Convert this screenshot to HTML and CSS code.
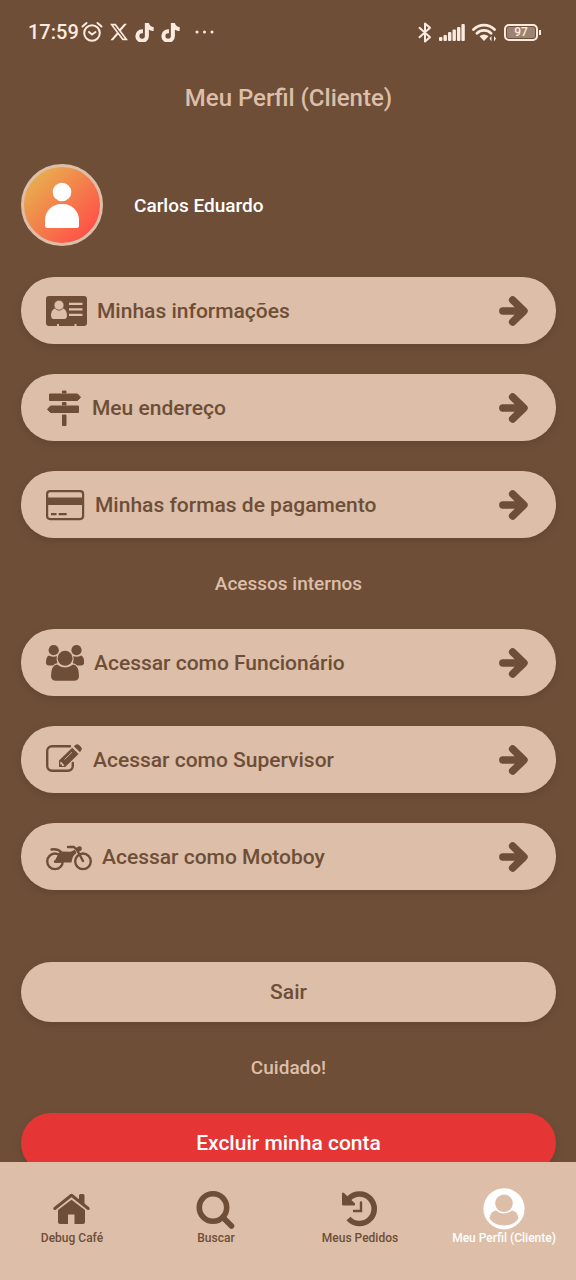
FILE: index.html
```
<!DOCTYPE html>
<html lang="pt-BR">
<head>
<meta charset="utf-8">
<meta name="viewport" content="width=device-width, initial-scale=1">
<title>Meu Perfil (Cliente)</title>
<link rel="stylesheet" href="styles.css">
</head>
<body>
<svg class="defs" aria-hidden="true">
  <symbol id="arrow" viewBox="0 0 30 30"><path d="M3.8 15H23M13.6 4 25 15 13.6 26" fill="none" stroke="currentColor" stroke-width="7.4" stroke-linecap="round" stroke-linejoin="round"/></symbol>
  <symbol id="tiktok" viewBox="0 0 16 16"><path d="M9 0h1.98c.144.715.54 1.617 1.235 2.512C12.895 3.389 13.797 4 15 4v2c-1.753 0-3.07-.814-4-1.829V11a5 5 0 1 1-5-5v2a3 3 0 1 0 3 3z" fill="currentColor" stroke="currentColor" stroke-width="1.4"/></symbol>
</svg>

<div class="status">
  <div class="status-group">
    <span class="clock">17:59</span>
    <svg width="22" height="22" viewBox="0 0 22 22" fill="none" stroke="currentColor" stroke-width="2" stroke-linecap="round"><circle cx="11" cy="12" r="7.8"/><path d="M1.5 5.5 5.5 2M20.5 5.5 16.5 2M8 11l3 2.500 3.500-2.500"/></svg>
    <svg width="18" height="18" viewBox="0 0 16 16"><path fill="currentColor" d="M12.6.75h2.454l-5.36 6.142L16 15.25h-4.937l-3.867-5.07-4.425 5.07H.316l5.733-6.57L0 .75h5.063l3.495 4.633L12.601.75Zm-.86 13.028h1.360L4.323 2.145H2.865z"/></svg>
    <svg width="19" height="19"><use href="#tiktok"/></svg>
    <svg width="19" height="19"><use href="#tiktok"/></svg>
    <svg class="dots" width="20" height="4" viewBox="0 0 20 4" fill="currentColor"><circle cx="3" cy="2" r="1.500"/><circle cx="10.500" cy="2" r="1.500"/><circle cx="18" cy="2" r="1.500"/></svg>
  </div>
  <div class="status-group status-right">
    <svg width="14" height="21" viewBox="0 0 14 21" fill="none" stroke="currentColor" stroke-width="2" stroke-linejoin="round" stroke-linecap="round"><path d="M1.500 5.800 12 15.200 7 19.500V1.500l5 4.300L1.500 15.200"/></svg>
    <svg width="26" height="19" viewBox="0 0 26 19" fill="currentColor"><rect y="14" width="3.400" height="4" rx="1"/><rect x="4.500" y="12" width="3.400" height="6" rx="1"/><rect x="9" y="9" width="3.400" height="9" rx="1"/><rect x="13.500" y="6.500" width="3.400" height="11.500" rx="1"/><rect x="18" y="4" width="3.400" height="14" rx="1"/><rect x="22.400" y="1" width="3.400" height="17" rx="1"/></svg>
    <svg width="25" height="20" viewBox="0 0 25 20"><path d="M1.500 7.500a15 15 0 0 1 21 0M5 11.200a10 10 0 0 1 14 0" fill="none" stroke="currentColor" stroke-width="2.800" stroke-linecap="round"/><path d="M7.500 14.200a7 7 0 0 1 9 0L12 19zM17.500 16.500l1.900-2.500v5.500zM24 16.500 22 14v5.500z" fill="currentColor"/></svg>
    <span class="battery">97</span>
  </div>
</div>

<main class="screen">
  <h1 class="title">Meu Perfil (Cliente)</h1>
  <div class="user">
    <svg class="avatar" viewBox="0 0 82 82" role="img" aria-label="Foto de perfil">
      <defs><linearGradient id="g" x1="0" y1="0" x2="1" y2="1"><stop offset=".12" stop-color="#e8b04e"/><stop offset=".85" stop-color="#ff5148"/></linearGradient></defs>
      <circle cx="41" cy="41" r="39.500" fill="url(#g)" stroke="#ddbea9" stroke-width="3"/>
      <circle cx="41" cy="28" r="9.300" fill="#fff"/>
      <path d="M24 61.500V56a16 16 0 0 1 16-16h2a16 16 0 0 1 16 16v5.500q0 2.500-2.500 2.500h-29q-2.500 0-2.500-2.500z" fill="#fff"/>
    </svg>
    <span class="name">Carlos Eduardo</span>
  </div>

  <div class="menu">
    <button class="row" type="button">
      <svg width="41" height="36" viewBox="0 0 41 36"><rect y="3" width="41" height="30" rx="3" fill="currentColor"/><g fill="#ddbea9"><path d="M9 15.500c-2.700.6-4 4-4 7.200 0 2 1.200 3.300 2.700 3.300h10.600c1.500 0 2.700-1.300 2.700-3.300 0-3.200-1.300-6.600-4-7.200q-4 3.800-8 0z"/><circle cx="13" cy="12.200" r="4.900" stroke="#6e4e37" stroke-width=".6"/><path d="M23 9.800h13.500v2.200H23zM23 15.300h13.500v2.200H23zM23 20.800h13.500V23H23zM11 31h2v3h-2zM28.500 31h2v3h-2z"/></g></svg>
      <span class="label">Minhas informações</span>
      <svg class="arrow"><use href="#arrow"/></svg>
    </button>
    <button class="row" type="button">
      <svg width="36" height="36" viewBox="0 0 36 36" fill="currentColor" stroke="currentColor" stroke-linejoin="round"><path d="M16.500 1h3.500v2h-3.500zM3.500 4h28l3 3.200-3 3.300h-28zM16.500 12.500h3.500V15h-3.500zM32.500 16h-28l-3 3.300 3 3.200h28zM16.500 25h3.500v10.500h-3.500z"/></svg>
      <span class="label">Meu endereço</span>
      <svg class="arrow"><use href="#arrow"/></svg>
    </button>
    <button class="row" type="button">
      <svg width="39" height="36" viewBox="0 0 39 36"><rect x="1.100" y="4.100" width="36" height="28" rx="3" fill="none" stroke="currentColor" stroke-width="2.200"/><path d="M1 10.500h36V18H1zM5 26h5.500v2.300H5zM12.700 26h8v2.300h-8z" fill="currentColor"/></svg>
      <span class="label">Minhas formas de pagamento</span>
      <svg class="arrow"><use href="#arrow"/></svg>
    </button>
  </div>

  <h2 class="section">Acessos internos</h2>

  <div class="menu">
    <button class="row" type="button">
      <svg width="38" height="36" viewBox="0 0 38 36" fill="currentColor"><circle cx="7.700" cy="5.200" r="5.100"/><circle cx="30.500" cy="5.200" r="5.100"/><path d="M3 10.500Q7.500 12.800 11 11q-1 4 .5 7-3 .5-4.500 2.500H3q-3 0-3-3 0-6 3-7zM35.200 10.500q-4.500 2.300-8 .5 1 4-.5 7 3 .5 4.500 2.500h4q3 0 3-3 0-6-3-7zM11 19.600q8 6 16.200 0 5.800 1 5.800 11.400 0 4.800-5 4.800H10q-5 0-5-4.800 0-10.400 6-11.400z"/><circle cx="19.100" cy="13.200" r="7.500"/></svg>
      <span class="label">Acessar como Funcionário</span>
      <svg class="arrow"><use href="#arrow"/></svg>
    </button>
    <button class="row" type="button">
      <svg width="37" height="36" viewBox="0 0 37 36"><path d="M24 4.200H6A4.800 4.800 0 0 0 1.200 9v15A4.800 4.800 0 0 0 6 28.800h16a4.800 4.800 0 0 0 4.800-4.800v-3" fill="none" stroke="currentColor" stroke-width="2.400" stroke-linecap="round"/><path d="M13 18.500 26.200 5.800l6.300 6.200L19.200 25H13zM27.800 4.300 30 2.600q1.500-1 3 .4l2.200 2.300q1.300 1.500 0 3L34 10.200z" fill="currentColor"/><path d="m14.700 19.500 3.700 3.700-1 .8H16v-1.500h-1.700v-2z" fill="#ddbea9"/><path d="m18.500 17.500 7.500-7.300" stroke="#ddbea9" stroke-width=".8"/></svg>
      <span class="label">Acessar como Supervisor</span>
      <svg class="arrow"><use href="#arrow"/></svg>
    </button>
    <button class="row" type="button">
      <svg width="46" height="36" viewBox="0 0 46 36"><g fill="none" stroke="currentColor" stroke-width="2.400" stroke-linecap="round" stroke-linejoin="round"><circle cx="9" cy="22.300" r="7.800"/><circle cx="37" cy="22.300" r="7.800"/><path d="m37 22-6.500-12M22 8h6l3 3M5.500 10.500q6-1 9.500 2.500M9 22.500h6"/></g><path d="M8.500 22.500 13 13.500l2.500-1 9 .2 4.500-2L30.500 14q-4.500 3-5 9.500H15L9 24zM30 10q1-3 4-2.700 2.500.7 1.500 4l-3.500 2z" fill="currentColor"/></svg>
      <span class="label">Acessar como Motoboy</span>
      <svg class="arrow"><use href="#arrow"/></svg>
    </button>
  </div>

  <button class="pill logout" type="button">Sair</button>
  <h2 class="section">Cuidado!</h2>
  <button class="pill danger" type="button">Excluir minha conta</button>
</main>

<nav class="tabs">
  <a class="tab" href="#home">
    <svg width="42" height="42" viewBox="0 0 42 42"><path d="M3.800 20.500 20.500 7.300l16.700 13.200" fill="none" stroke="currentColor" stroke-width="3" stroke-linecap="round" stroke-linejoin="round"/><path d="M28 7.500q0-1.500 1.500-1.500h2.500q1.500 0 1.500 1.500V17L28 13zM7 22 20.500 11.700 34 22v12q0 2-2 2h-8.500v-9.500H17V36H9q-2 0-2-2z" fill="currentColor"/></svg>
    <span>Debug Café</span>
  </a>
  <a class="tab" href="#buscar">
    <svg width="42" height="42" viewBox="0 0 42 42" fill="none" stroke="currentColor" stroke-width="5.600" stroke-linecap="round"><circle cx="18" cy="19.500" r="13.700"/><path d="m28 29.500 8.500 8.500"/></svg>
    <span>Buscar</span>
  </a>
  <a class="tab" href="#pedidos">
    <svg width="42" height="42" viewBox="0 0 42 42"><path d="M9.500 30.500A14.700 14.700 0 1 0 10 10.500" fill="none" stroke="currentColor" stroke-width="5.600"/><path d="M3 5.500Q3.500 4 5 5l11 10.500q.5 2-1 2H4.500Q3 17.500 3 16z" fill="currentColor"/><path d="M22 14.500v8.500h-7" fill="none" stroke="currentColor" stroke-width="2.400" stroke-linecap="round"/></svg>
    <span>Meus Pedidos</span>
  </a>
  <a class="tab active" href="#perfil" aria-current="page">
    <svg width="42" height="42" viewBox="0 0 42 42"><circle cx="21" cy="20.800" r="20.600" fill="currentColor"/><g fill="#ddbea9"><circle cx="21" cy="15.300" r="8.800"/><path d="M13 22.500q8 6 16 0 5.500.5 6.500 8Q30.500 37.500 21 37.500T6.500 30.500q1-7.500 6.500-8z"/></g></svg>
    <span>Meu Perfil (Cliente)</span>
  </a>
</nav>
</body>
</html>
```
FILE: styles.css
```
* { box-sizing: border-box; }

body {
  margin: 0;
  height: 100vh;
  display: flex;
  flex-direction: column;
  background: #6e4e37;
  color: #ddbea9;
  font-family: Roboto, "Liberation Sans", sans-serif;
  font-weight: 500;
}

.defs { position: absolute; width: 0; height: 0; }
svg { display: block; flex: none; }
button { border: 0; font: inherit; cursor: pointer; }

.status {
  display: flex;
  justify-content: space-between;
  padding: 20px 38px 0 28px;
  color: #fbeadf;
}
.status-group { display: flex; align-items: center; height: 24px; gap: 7px; }
.clock { font-size: 20px; margin-right: -5px; }
.dots { margin-left: 7px; }
.battery {
  position: relative;
  width: 34px;
  height: 17px;
  border: 2px solid #fbeadf;
  border-radius: 5px;
  box-shadow: inset 0 0 0 1px #6e4e37;
  background: #9c8272;
  font-size: 12px;
  line-height: 13px;
  text-align: center;
}
.battery::after {
  content: "";
  position: absolute;
  right: -5px;
  top: 4px;
  width: 2px;
  height: 5px;
  background: #fbeadf;
}

.screen {
  flex: 1;
  min-height: 0;
  overflow: hidden;
  display: flex;
  flex-direction: column;
  padding: 38px 20px 0 21px;
}
.screen > * { flex: none; }
.title {
  margin: 0;
  font-size: 24px;
  line-height: 32px;
  font-weight: 500;
  text-align: center;
}

.user {
  display: flex;
  align-items: center;
  gap: 31px;
  margin: 50px 0 31px;
  color: #fff;
}
.avatar { width: 82px; height: 82px; }
.name { font-size: 19px; }

.menu { display: flex; flex-direction: column; gap: 30px; }
.row {
  display: flex;
  align-items: center;
  gap: 10px;
  width: 100%;
  height: 67px;
  padding: 0 27px 0 25px;
  border-radius: 33px;
  background: #ddbea9;
  color: #6e4e37;
  text-align: left;
  box-shadow: 0 3px 8px #0000001a;
}
.label { flex: 1; font-size: 21px; }
.arrow { width: 30px; height: 30px; }

.section {
  margin: 0;
  padding: 34px 0 33px;
  font-size: 19px;
  line-height: 24px;
  font-weight: 500;
  text-align: center;
}

.pill {
  width: 100%;
  height: 60px;
  border-radius: 30px;
  font-size: 21px;
  text-align: center;
  box-shadow: 0 3px 8px #0000001a;
}
.logout { margin-top: 72px; background: #ddbea9; color: #6e4e37; }
.danger { background: #e63535; color: #fff; }

.tabs {
  display: grid;
  grid-template-columns: repeat(4, 1fr);
  height: 118px;
  padding-top: 26px;
  background: #ddbea9;
}
.tab {
  display: flex;
  flex-direction: column;
  align-items: center;
  color: #6e4e37;
  font-size: 12px;
  line-height: 16px;
  text-decoration: none;
  white-space: nowrap;
}
.tab.active { color: #fff; }
```
